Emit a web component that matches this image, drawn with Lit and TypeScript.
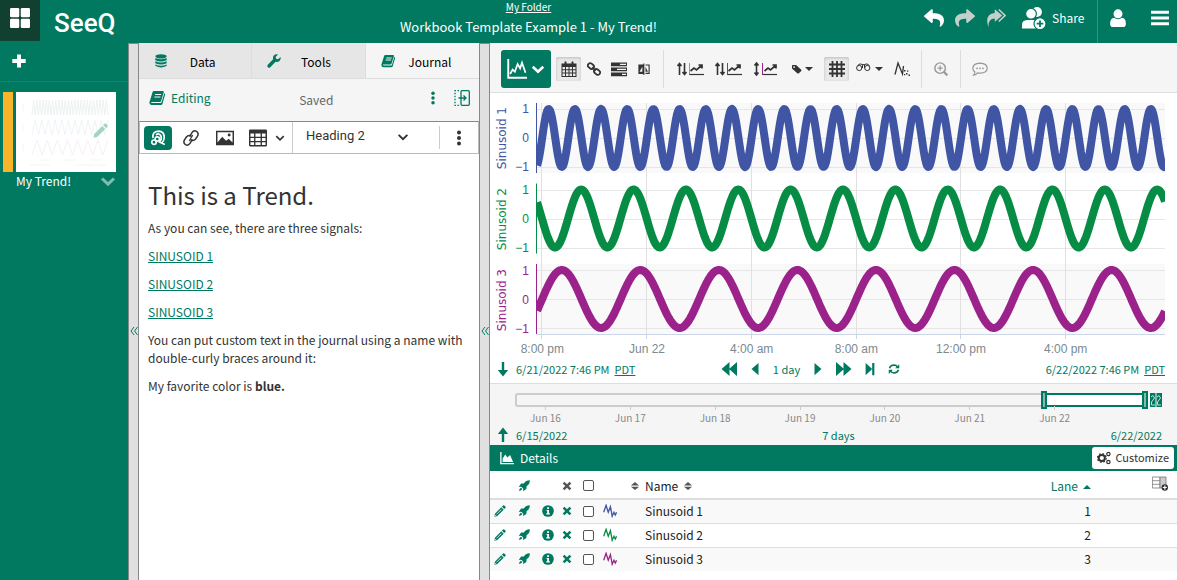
import { LitElement, html, css, svg } from "lit";
import { customElement } from "lit/decorators.js";

const REPLY = "M8.3 189.8L184.3 37.9C199.7 24.5 224 35.3 224 56v80.1c160.6 1.8 288 34 288 186.2 0 61.4-39.6 122.3-83.3 154.1-13.7 9.9-33.1-2.5-28.1-18.6 45.3-145-21.5-183.5-176.6-185.7V360c0 20.7-24.3 31.5-39.7 18.2l-176-152c-11.1-9.6-11.1-26.8 0-36.4z";
const PEN = svg`<path d="M10.6 2.2 12 .8Q13 0 14 .9L15.2 2Q16 3 15.2 4L13.8 5.4z"/><path fill-rule="evenodd" d="M9.7 3.1 12.9 6.3 4.4 14.8.6 15.5 1.2 11.6zM3 12.2l6.5-6.5.6.6-6.5 6.5zM1.6 13.1l-.2 1.5 1.5-.3z"/>`;
const BOOK = svg`<path fill-rule="evenodd" d="M5 1Q4 1 3.6 2L.5 12Q0 14.6 2.5 15H12Q13 15 13.4 14L16 5Q16.2 3.6 15.3 3.2L12.6 12.2Q12.3 13 11.6 13H3Q1.6 12.6 2.4 12H11Q11.8 12 12 11.2L14.8 2.3Q15 1 13.8 1zM6.2 4 5.9 5H12L12.3 4zM5.5 6.4 5.2 7.4H11.3L11.6 6.4z"/>`;
const ROCKET = svg`<path d="M15.8.2Q10.5.2 7.8 4.6L4.5 4.8Q3.8 5 3.2 6L1 9.2Q3.4 8.8 4.8 9.2L6.8 11.2Q7.2 12.8 6.8 15L10 12.8Q11 12.2 11.2 11.5L11.4 8.2Q16 5.4 15.8.2z"/><path d="M4 10.2Q2 10.5 1.2 14.8 5 14.2 5.8 12z"/>`;
const ICONS: Record<string, unknown> = {
  apps: svg`<rect x="0" y="0" width="7.4" height="7.4" rx="1"/><rect x="8.6" y="0" width="7.4" height="7.4" rx="1"/><rect x="0" y="8.6" width="7.4" height="7.4" rx="1"/><rect x="8.6" y="8.6" width="7.4" height="7.4" rx="1"/>`,
  plus: svg`<path d="M6 1.5h4V6h4.7v4H10v4.5H6V10H1.300V6H6z"/>`,
  chevron: svg`<path d="M2 5.500 8 11.2 14 5.500" fill="none" stroke="currentColor" stroke-width="3"/>`,
  caret: svg`<path d="M3 5.500 8 10.500 13 5.500" fill="none" stroke="currentColor" stroke-width="2.200"/>`,
  undo: svg`<path transform="scale(.03125)" d="${REPLY}"/>`,
  redo: svg`<path transform="translate(16) scale(-.03125 .03125)" d="${REPLY}"/>`,
  redoAll: svg`<path d="M7 1 13 6 7 11V8.300Q1.500 8.500 2 15.500-1.600 5 7 4z"/><path d="M10.200 1.200 15.200 6 10.200 10.800" fill="none" stroke="currentColor" stroke-width="1.300"/>`,
  share: svg`<circle cx="10" cy="4" r="3.300"/><circle cx="6" cy="5.200" r="3.600" stroke="#007960" stroke-width=".8"/><path d="M0 15v-2.500Q0 9.500 3.500 9.300H8Q11 9.500 11 12.500V15z"/><circle cx="12" cy="11.800" r="4" stroke="#007960" stroke-width=".8"/><path d="M12 9.600v4.400M9.800 11.800h4.400" stroke="#007960" stroke-width="1.200"/>`,
  user: svg`<circle cx="8" cy="4.300" r="4"/><path d="M1 13Q1 8.200 4.500 7.800 8 10.300 11.500 7.800 15 8.200 15 13 15 16 12.500 16H3.500Q1 16 1 13z"/>`,
  bars: svg`<path d="M0 1.500h16v2.800H0zM0 6.600h16v2.800H0zM0 11.700h16v2.800H0z"/>`,
  data: svg`<ellipse cx="8" cy="2.700" rx="6.500" ry="2.500"/><path d="M1.500 4.500Q8 7.500 14.500 4.500V7Q8 10 1.500 7zM1.500 8.300Q8 11.300 14.500 8.300v2.200Q8 13.500 1.500 10.500zM1.500 11.900Q8 14.900 14.500 11.900v1.500Q8 17.500 1.500 13.400z"/>`,
  wrench: svg`<path d="M15.500 3.300 12.700 5.900 10.300 5.500 10 3.200 12.600.5Q9.500-.3 7.600 2 6.400 3.800 7 6L.9 12.200Q-.3 13.800 1 15 2.400 16.200 3.800 15L9.800 8.900Q12.300 9.500 14.200 8 16.200 6 15.500 3.300z"/>`,
  book: BOOK,
  dots: svg`<circle cx="8" cy="2.500" r="2"/><circle cx="8" cy="8" r="2"/><circle cx="8" cy="13.500" r="2"/>`,
  dock: svg`<g fill="none" stroke="currentColor" stroke-width="1.300"><rect x="7" y=".7" width="8.300" height="14.600" rx="1"/><path d="M5 .7H1V15.300H5" stroke-dasharray="1.500 1.500"/><path d="M4.500 8H12M9.500 5.500 12 8 9.500 10.500"/></g>`,
  seeqLink: svg`<g fill="none" stroke="currentColor" stroke-width="1.700"><path d="M3 8Q2 1.500 8.500 1.200 14.500 1.500 14.200 8 13.800 11.500 11.500 13.200M6 5Q9 2.500 11 6 12 9.500 9.500 12L14.800 14.600"/><circle cx="4" cy="12.200" r="2.200"/><circle cx="7.300" cy="9" r="2.200"/></g>`,
  link: svg`<g fill="none" stroke="currentColor" stroke-width="1.500" stroke-linecap="round"><path d="M7 6 8.800 2.800Q10.800-.2 13.500 1.300 16.200 3.200 14.500 6.200L12.600 9Q10.700 11.300 8 10"/><path d="M9 10 7.200 13.200Q5.200 16.200 2.500 14.700-.2 12.800 1.500 9.800L3.400 7Q5.300 4.700 8 6"/><path d="M6.500 10.500 9.500 5.500" stroke-width="1.200"/></g>`,
  image: svg`<path fill-rule="evenodd" d="M0 1.500H16V14.500H0zM1.300 2.800V12L5.500 6.800 9 10.500 11.300 8.700 14.700 12V2.800z"/><circle cx="11.700" cy="5.300" r="1.300"/>`,
  table: svg`<path fill-rule="evenodd" d="M1 .5H15Q16 .5 16 1.500V14.500Q16 15.500 15 15.500H1Q0 15.500 0 14.500V1.500Q0 .5 1 .5zM1.300 4V6.800H4.500V4zM5.700 4V6.800H10.300V4zM11.500 4V6.800H14.700V4zM1.300 8V10.600H4.500V8zM5.700 8V10.600H10.300V8zM11.500 8V10.600H14.700V8zM1.300 11.800V14.300H4.500V11.800zM5.700 11.800V14.300H10.300V11.800zM11.500 11.800V14.300H14.700V11.800z"/>`,
  trend: svg`<path d="M1 0V15H16" fill="none" stroke="currentColor" stroke-width="1.500"/><path d="M2.500 12 4.500 8.500 6.300 10.200 8.500 4 10.500 7.500 12 3 14.800 11" fill="none" stroke="currentColor" stroke-width="1.400"/>`,
  calendar: svg`<path fill-rule="evenodd" d="M.5 2.500H3.500V1Q4.500-.3 5.500 1V2.500H10.500V1Q11.500-.3 12.500 1V2.500H15.500V16H.5zM1.500 6V8.200H4V6zM5 6V8.200H7.500V6zM8.500 6V8.200H11V6zM12 6V8.200H14.500V6zM1.500 9.200V11.600H4V9.200zM5 9.200V11.600H7.500V9.200zM8.500 9.200V11.600H11V9.200zM12 9.200V11.600H14.500V9.200zM1.500 12.600V15H4V12.600zM5 12.600V15H7.500V12.600zM8.500 12.600V15H11V12.600zM12 12.600V15H14.500V12.600z"/>`,
  chain: svg`<g fill="none" stroke="currentColor" stroke-width="2"><rect x="-3.700" y="-2.600" width="7.400" height="5.200" rx="2.500" transform="translate(4.500 4.700) rotate(40)"/><rect x="-3.700" y="-2.600" width="7.400" height="5.200" rx="2.500" transform="translate(11.500 11.300) rotate(40)"/><path d="M6 6 10 10"/></g>`,
  stack: svg`<path fill-rule="evenodd" d="M0 1.500H16V5.300H0zM9 2.800V4H15V2.800zM0 6.500H16V10.300H0zM6 7.800V9H15V7.800zM0 11.500H16V15.300H0zM11 12.800V14H15V12.800z"/>`,
  compare: svg`<path d="M.5 2H7V14.500H.5zM7 .5h1.500v15.500H7z"/><path d="M10 2.700H14.800V13.800H10" fill="none" stroke="currentColor" stroke-width="1.500"/><path d="M2 11.500 5.800 5V11.500z" fill="#f5f5f5"/><path d="M10 5V11.500H13.200z"/>`,
  tag: svg`<path fill-rule="evenodd" d="M0 2.500Q0 1.500 1 1.500H6.500L14.800 9.300Q15.600 10.200 14.800 11L10.500 15Q9.700 15.700 8.900 15L0 7.200zM3.300 3.500a1.300 1.300 0 1 0 .1 0z"/>`,
  grid: svg`<path d="M0 3.500H16M0 8H16M0 12.500H16M3.500 0V16M8 0V16M12.500 0V16" fill="none" stroke="currentColor" stroke-width="1.800"/>`,
  glasses: svg`<g fill="none" stroke="currentColor" stroke-width="1"><circle cx="3.200" cy="7" r="2.600"/><circle cx="11.300" cy="7" r="2.600"/><path d="M1.500 4.500Q4 1.800 6.500 3.500V7M8.500 7V3.500Q11 1.800 13.500 4.500M6.500 3.600H8.500"/></g>`,
  sparse: svg`<path d="M1 13.500 4 2 8.500 13 9.500 5" fill="none" stroke="currentColor" stroke-width="1.300"/><path d="M10 9h1.500v1.500H10zM12 12h1.500v1.500H12zM14.500 13.500H16V15h-1.500zM10 13h1.300v1.300H10zM13 9.500h1.300v1.300H13z"/>`,
  zoom: svg`<g fill="none" stroke="currentColor" stroke-width="1.700"><circle cx="7" cy="7" r="6"/><path d="M7 4V10M4 7H10" stroke-width="1.400"/><path d="M11.300 11.300 15.300 15.300" stroke-width="2.500"/></g>`,
  comment: svg`<path d="M8 2.200Q15.200 2.500 15.200 7.300 15 12 8 12.200 6.500 12.200 5.500 11.900 4 14 1.600 14.200 3 12.500 2.900 10.900.8 9.500.8 7.300 1 2.500 8 2.200z" fill="none" stroke="currentColor" stroke-width="1.200"/><circle cx="5" cy="7.300" r=".9"/><circle cx="8" cy="7.300" r=".9"/><circle cx="11" cy="7.300" r=".9"/>`,
  down: svg`<path d="M6.800 1H9.200V9H13.200L8 15.500 2.800 9H6.800z"/>`,
  up: svg`<path d="M6.800 15H9.200V7H13.200L8 .5 2.800 7H6.800z"/>`,
  back2: svg`<path d="M8.500 1V15L.5 8zM16 1V15L8 8z"/>`,
  back: svg`<path d="M12 1V15L4 8z"/>`,
  fwd: svg`<path d="M4 1V15L12 8z"/>`,
  fwd2: svg`<path d="M0 1V15L8 8zM7.500 1V15L15.500 8z"/>`,
  last: svg`<path d="M3 1V15L10.500 8zM10.500 1H13V15H10.500z"/>`,
  refresh: svg`<g fill="none" stroke="currentColor" stroke-width="2"><path d="M2 7Q3 3 8 2.800 11 2.800 13 5.500M14 9Q13 13 8 13.200 5 13.200 3 10.500"/></g><path d="M15 1.500V7H9.500zM1 14.500V9H6.500z"/>`,
  area: svg`<path d="M1 1V14.500H16" fill="none" stroke="currentColor" stroke-width="1.500"/><path d="M3 12.500V8.500L6 4 8.500 7.500 11.500 4.500 15 12.500z"/>`,
  cogs: svg`<circle cx="5.500" cy="8" r="3.500" fill="none" stroke="currentColor" stroke-width="2.200"/><circle cx="5.500" cy="8" r="5" fill="none" stroke="currentColor" stroke-width="1.400" stroke-dasharray="2 1.930"/><circle cx="13" cy="3.500" r="1.900" fill="none" stroke="currentColor" stroke-width="1.400"/><circle cx="13" cy="12.500" r="1.900" fill="none" stroke="currentColor" stroke-width="1.400"/>`,
  rocket: ROCKET,
  close: svg`<path d="M2.500 2.500 13.500 13.500M13.500 2.500 2.500 13.500" stroke="currentColor" stroke-width="4" fill="none"/>`,
  pen: PEN,
  info: svg`<circle cx="8" cy="8" r="7.800"/><path d="M6 6.500H9.300V11H10.500V12.500H5.700V11H7V8H6zM6.900 3H9.300V5.200H6.900z" fill="#fff"/>`,
  signal: svg`<path d="M.8 9.500 3.500 1.500 6 9.500 8.500 3 10.500 14 12.500 9.500 14 12.500 15.500 9.500" fill="none" stroke="currentColor" stroke-width="1.500"/>`,
  sort: svg`<path d="M8 1.500 14.500 7H1.500zM8 14.500 14.500 9H1.500z"/>`,
  columns: svg`<g fill="none" stroke="#777" stroke-width=".8"><path d="M.4 1H8V12H.4zM.4 4.700H8M.4 8.300H8"/></g><path d="M8 1H14V12H8z" fill="#ccc" stroke="#777" stroke-width=".8"/><circle cx="12.800" cy="11.500" r="3.200" fill="#333"/><path d="M12.800 9.500v4M10.800 11.500h4" stroke="#fff" stroke-width="1.200"/>`,
};
const icon = (name: string, cls = "") =>
  html`<svg class="ic ${cls}" viewBox="0 0 16 16" aria-hidden="true">${ICONS[name]}</svg>`;

const laneIcon = (kind: number) => html`<svg class="wide" viewBox="0 0 27 14" aria-hidden="true">
  ${kind === 2
    ? svg`<path d="M3.500 2V12M1.500 3.500 3.500 1 5.500 3.500M1.500 10.500 3.500 13 5.500 10.500" fill="none" stroke="#333" stroke-width="1.600"/>`
    : svg`<path d="M2.500 2V13M.5 4 2.500 1.500 4.500 4M7.500 1V12M5.500 10 7.500 12.500 9.500 10" fill="none" stroke="#333" stroke-width="1.600"/>`}
  <path d="${kind === 2 ? "M9.500 1V13" : "M12.500 1V13"}" stroke="${kind === 2 ? "#9b228b" : kind ? "#4055a3" : "#d8902f"}" stroke-width="1"/>
  <path d="${kind === 2 ? "M9.500 12.500H24" : "M12.500 12.500H27"}" stroke="#333" stroke-width="1.200"/>
  <g transform="translate(${kind === 2 ? -2 : 0} 0)"><path d="M13.500 9 17 6 19.500 8 24.500 3.500M21.500 3H25V6.500" fill="none" stroke="#333" stroke-width="1.700"/></g>
</svg>`;

const PLOT_W = 628;
const LANE_H = 70;
const GRID_X = [4, 109, 214, 319, 423, 528];
const wave = (period: number, peak: number) => {
  const pts: string[] = [];
  for (let x = 0; x <= PLOT_W; x += 1) {
    const y = 35 - 29 * Math.cos(((x - peak) / period) * 2 * Math.PI);
    pts.push(`${x},${y.toFixed(2)}`);
  }
  return pts.join(" ");
};
const SIGNALS = [
  { name: "Sinusoid 1", color: "#4055a3", period: 26.18, peak: 11.700, band: true },
  { name: "Sinusoid 2", color: "#068c45", period: 52.36, peak: 44.200, band: false },
  { name: "Sinusoid 3", color: "#9b228b", period: 78.54, peak: 24.800, band: true },
];
const HOURS = ["8:00 pm", "Jun 22", "4:00 am", "8:00 am", "12:00 pm", "4:00 pm"];
const DAYS = [16, 17, 18, 19, 20, 21, 22];

const base = css`
  * { box-sizing: border-box; }
  button, select, input { font: inherit; color: inherit; margin: 0; }
  button { display: flex; align-items: center; justify-content: center; padding: 0; border: 0; background: none; }
  a { color: inherit; }
  svg { display: block; flex: none; }
  .ic { width: 16px; height: 16px; fill: currentColor; }
  .s10 { width: 10px; height: 10px; }
  .s12 { width: 12px; height: 12px; }
  .s14 { width: 14px; height: 14px; }
  .s18 { width: 18px; height: 18px; }
  .s20 { width: 20px; height: 20px; }
  .s24 { width: 24px; height: 24px; }
`;

@customElement("app-header")
export class AppHeader extends LitElement {
  static styles = [base, css`
    :host { display: flex; height: 43px; background: #007960; color: #fff; }
    .left { display: flex; width: 139px; }
    .home { width: 40px; height: 41px; padding-bottom: 6px; background: #124030; }
    .logo { margin-left: 14px; font: 500 26px/46px Roboto, sans-serif; }
    .mid { flex: 1; text-align: center; }
    .folder { display: block; font-size: 10px; line-height: 14px; }
    h1 { margin: 6px 0 0; font-size: 13px; font-weight: 400; line-height: 14px; }
    .right { display: flex; width: 259px; }
    .right button { width: 31px; height: 36px; }
    .right .dim { color: #c3cfca; }
    .right .share { width: 86px; gap: 6px; justify-content: flex-start; padding-left: 11px; font-size: 12px; }
    .right .user { width: 41px; height: 43px; padding-bottom: 7px; border-left: 1px solid #33947f; }
    .right .menu { flex: 1; padding-left: 5px; }
  `];
  render() {
    return html`
      <div class="left">
        <button class="home" aria-label="Home">${icon("apps", "s20")}</button>
        <span class="logo">SeeQ</span>
      </div>
      <div class="mid">
        <a class="folder" href="#">My Folder</a>
        <h1>Workbook Template Example 1 - My Trend!</h1>
      </div>
      <div class="right">
        <button aria-label="Undo">${icon("undo", "s20")}</button>
        <button class="dim" aria-label="Redo">${icon("redo", "s20")}</button>
        <button class="dim" aria-label="Redo all">${icon("redoAll", "s20")}</button>
        <button class="share">${icon("share", "s24")}<span>Share</span></button>
        <button class="user" aria-label="Account">${icon("user", "s18")}</button>
        <button class="menu" aria-label="Menu">${icon("bars", "s18")}</button>
      </div>`;
  }
}

@customElement("worksheet-list")
export class WorksheetList extends LitElement {
  static styles = [base, css`
    :host { display: block; width: 128px; background: #007960; color: #fff; }
    .add { width: 100%; height: 39px; padding: 0 0 3px 11px; justify-content: flex-start; border-bottom: 1px solid #12866d; }
    .sheet { display: grid; grid-template-columns: 10px 100px; column-gap: 3px; padding: 10px 12px 0 3px; }
    .mark { background: #fab42a; }
    .thumb { height: 80px; background: #fff; }
    .name { grid-column: 2; display: flex; justify-content: space-between; align-items: center; font-size: 12px; line-height: 18px; }
    .name svg { color: #7fbcaf; }
  `];
  render() {
    const mini = (n: number, y: number) => {
      let d = "";
      for (let i = 0; i <= n; i++) d += `${i ? "L" : "M"}${16 + (i * 76) / n} ${i % 2 ? y : y + 15}`;
      return d;
    };
    return html`
      <button class="add" aria-label="Add worksheet">${icon("plus")}</button>
      <div class="sheet">
        <div class="mark"></div>
        <div class="thumb">
          <svg viewBox="0 0 100 80" width="100" height="80" fill="none">
            <path d="${mini(48, 8)}" stroke="#edf3f1"/>
            <path d="${mini(23, 28)}" stroke="#f1f3f8"/>
            <path d="${mini(15, 48)}" stroke="#f7f0f4"/>
            <path d="M7 12v7M7 32v7M7 52v7M25 68h9M48 68h12M74 68h12M14 73h20M60 73h30" stroke="#f4f4f4"/>
            <g transform="translate(77 31) scale(.95)" fill="#a5d4c6"><path d="M9.700 3.100 12.900 6.300 4.400 14.800.6 15.500 1.200 11.600zM10.600 2.200 12 .8Q13 0 14 .9L15.200 2Q16 3 15.200 4L13.800 5.400z"/></g>
          </svg>
        </div>
        <div class="name"><span>My Trend!</span>${icon("chevron")}</div>
      </div>`;
  }
}

@customElement("journal-panel")
export class JournalPanel extends LitElement {
  static styles = [base, css`
    :host { display: block; width: 340px; background: #fff; color: #333; }
    nav { display: grid; grid-template-columns: repeat(3, 1fr); height: 36px; }
    nav button { display: grid; grid-template-columns: 14px 1fr; padding: 0 14px 0 15px; border-right: 1px solid #ddd; border-bottom: 1px solid #ddd; background: #e6e6e6; color: #000; font-size: 12px; }
    nav button:last-child { border-right: 0; background: #f5f5f5; }
    nav span { text-align: center; padding-top: 4px; }
    nav svg { color: #007960; }
    .bar { display: flex; align-items: center; height: 42px; padding: 0 3px 0 10px; background: #f5f5f5; color: #007960; font-size: 12px; }
    .edit { gap: 6px; padding-bottom: 4px; }
    .saved { flex: 1; text-align: center; color: #666; padding-left: 4px; }
    .bar .more { width: 29px; padding-bottom: 4px; }
    .tools { display: flex; align-items: center; height: 33px; border: 1px solid #bbb; border-top-color: #888; padding-left: 4px; }
    .seeq { width: 28px; height: 24px; border-radius: 4px; background: #007960; color: #fff; }
    .tool { width: 30px; }
    .tool.link { width: 38px; }
    .tool.tbl { width: 52px; gap: 7px; padding-left: 3px; }
    .pick { display: flex; align-items: center; flex: 1; height: 31px; border-left: 1px solid #ccc; padding: 0 29px 2px 13px; font-family: Roboto, sans-serif; }
    select { flex: 1; min-width: 0; appearance: none; border: 0; background: none; padding: 0; font-size: 13px; }
    .tools .last { width: 39px; height: 23px; border-left: 1px solid #ccc; }
    article { padding: 24px 8px 0 9px; font-size: 12px; line-height: 18px; }
    h2 { margin: 0 0 7px; font-size: 24px; font-weight: 400; line-height: 34px; }
    p { margin: 0 0 10px; }
    article a { color: #007960; }
  `];
  render() {
    return html`
      <nav>
        <button>${icon("data", "s14")}<span>Data</span></button>
        <button>${icon("wrench", "s14")}<span>Tools</span></button>
        <button>${icon("book", "s14")}<span>Journal</span></button>
      </nav>
      <div class="bar">
        <button class="edit">${icon("book")}<span>Editing</span></button>
        <span class="saved">Saved</span>
        <button class="more" aria-label="More options">${icon("dots", "s14")}</button>
        <button class="more" aria-label="Dock panel">${icon("dock")}</button>
      </div>
      <div class="tools">
        <button class="seeq" aria-label="Insert Seeq link">${icon("seeqLink")}</button>
        <button class="tool link" aria-label="Insert link">${icon("link")}</button>
        <button class="tool" aria-label="Insert image">${icon("image", "s18")}</button>
        <button class="tool tbl" aria-label="Insert table">${icon("table", "s18")}${icon("caret", "s12")}</button>
        <div class="pick">
          <select aria-label="Text style"><option>Heading 2</option><option>Paragraph</option></select>
          ${icon("caret", "s14")}
        </div>
        <button class="last" aria-label="More tools">${icon("dots")}</button>
      </div>
      <article>
        <h2>This is a Trend.</h2>
        <p>As you can see, there are three signals:</p>
        <p><a href="#">SINUSOID 1</a></p>
        <p><a href="#">SINUSOID 2</a></p>
        <p><a href="#">SINUSOID 3</a></p>
        <p>You can put custom text in the journal using a name with double-curly braces around it:</p>
        <p>My favorite color is <b>blue.</b></p>
      </article>`;
  }
}

@customElement("trend-toolbar")
export class TrendToolbar extends LitElement {
  static styles = [base, css`
    :host { display: flex; align-items: center; height: 50px; padding: 2px 0 0 11px; background: #f5f5f5; border-bottom: 1px solid #ddd; color: #333; }
    .view { width: 50px; height: 38px; margin-right: 5px; gap: 4px; border-radius: 3px; background: #007960; color: #fff; }
    .b { width: 25px; height: 24px; }
    .lane { width: 38px; height: 24px; }
    .drop { width: 35px; height: 24px; gap: 3px; }
    .drop::after { content: ""; border: 4px solid transparent; border-top-color: #333; border-bottom: 0; }
    .on { background: #e9e9e9; box-shadow: inset 0 1px 3px #bbb; border-radius: 2px; }
    .sep { width: 1px; height: 38px; background: #ddd; margin: 0 7px; }
    .grid { margin: 0 3px 0 4px; }
    .sum { margin-left: 2px; }
    .dim { width: 24px; height: 24px; color: #999; }
    .wide { width: 27px; height: 14px; }
  `];
  render() {
    return html`
      <button class="view" aria-label="Trend view">${icon("trend", "s20")}${icon("chevron", "s14")}</button>
      <button class="b on" aria-label="Calendar time">${icon("calendar")}</button>
      <button class="b" aria-label="Chain view">${icon("chain", "s14")}</button>
      <button class="b" aria-label="Capsule time">${icon("stack")}</button>
      <button class="b" aria-label="Compare">${icon("compare", "s12")}</button>
      <span class="sep"></span>
      <button class="lane" aria-label="One lane">${laneIcon(0)}</button>
      <button class="lane" aria-label="One axis">${laneIcon(1)}</button>
      <button class="lane" aria-label="Reset axes">${laneIcon(2)}</button>
      <button class="drop" aria-label="Labels">${icon("tag", "s10")}</button>
      <button class="b on grid" aria-label="Gridlines">${icon("grid")}</button>
      <button class="drop" aria-label="Dimming">${icon("glasses")}</button>
      <button class="b sum" aria-label="Summary">${icon("sparse")}</button>
      <span class="sep"></span>
      <button class="dim" aria-label="Zoom">${icon("zoom", "s14")}</button>
      <span class="sep"></span>
      <button class="dim" aria-label="Annotate">${icon("comment")}</button>`;
  }
}

@customElement("trend-chart")
export class TrendChart extends LitElement {
  static styles = [base, css`
    :host { display: block; background: #fff; padding: 10px 12px 0 0; }
    .chart { display: grid; grid-template-columns: 24px 22px 1fr; grid-template-rows: 81px 81px 74px; }
    .label { display: flex; align-items: center; justify-content: center; height: 70px; }
    .label span { writing-mode: vertical-rl; transform: rotate(180deg); font: 12px/14px "DejaVu Sans", sans-serif; }
    .axis { display: flex; flex-direction: column; justify-content: space-between; height: 70px; padding-right: 7px; text-align: right; font: 12px/12px "Liberation Sans", sans-serif; }
    .plots { grid-column: 3; grid-row: 1 / span 3; }
    svg.plot { width: 100%; height: 236px; }
    .hours { display: grid; grid-template-columns: repeat(6, 1fr); padding: 3px 47px 0 0; font: 12px/14px "Liberation Sans", sans-serif; color: #7b8a90; text-align: center; }
  `];
  render() {
    return html`
      <div class="chart">
        ${SIGNALS.map((s) => html`
          <div class="label" style="color:${s.color}"><span>${s.name}</span></div>
          <div class="axis" style="color:${s.color}"><span>1</span><span>0</span><span>−1</span></div>`)}
        <div class="plots">
          <svg class="plot" viewBox="-1 0 629 236" preserveAspectRatio="none" role="img" aria-label="Three sinusoid signals">
            ${SIGNALS.map((s, i) => svg`
              ${s.band ? svg`<rect x="0" y="${i * 80.5}" width="628" height="${LANE_H}" fill="#f9f9f9"/>` : ""}
              ${[6, 35, 64].map((y) => svg`<path d="M0 ${Math.round(i * 80.5 + y) + 0.5}H628" stroke="#e6e6e6"/>`)}`)}
            ${GRID_X.map((x) => svg`<path d="M${x + 0.5} 0V231" stroke="#e0e0e0"/><path d="M${x + 0.5} 231V236" stroke="#ccd6eb"/>`)}
            <path d="M0 231.500H628" stroke="#ccd6eb"/>
            ${SIGNALS.map((s, i) => svg`
              <g transform="translate(0 ${i * 80.5})">
                <path d="M-.5 0V${LANE_H}" stroke="${s.color}" stroke-width="1"/>
                <polyline points="${wave(s.period, s.peak)}" fill="none" stroke="${s.color}" stroke-width="8" stroke-linejoin="round"/>
              </g>`)}
          </svg>
        </div>
      </div>
      <div class="hours">${HOURS.map((h) => html`<span>${h}</span>`)}</div>`;
  }
}

@customElement("time-range")
export class TimeRange extends LitElement {
  static styles = [base, css`
    :host { display: block; color: #007960; font-size: 11px; line-height: 16px; }
    .row { display: grid; grid-template-columns: 1fr auto 1fr; align-items: center; height: 27px; padding: 0 12px 1px 5px; background: #fff; }
    .start { display: flex; align-items: center; gap: 5px; }
    .end { text-align: right; }
    .nav { display: flex; align-items: center; gap: 11px; padding-right: 39px; }
    .days7 { padding-left: 20px; }
    .range { padding: 9px 12px 0 5px; background: #f5f5f5; border-top: 1px solid #ddd; }
    .track { display: flex; align-items: center; margin: 0 3px 0 20px; height: 14px; }
    .rest { flex: 528; height: 14px; border: 2px solid #ccc; border-right: 0; border-radius: 3px 0 0 3px; }
    .sel { flex: 96; height: 14px; border: 2px solid #007960; border-width: 2px 0; background: #fff; }
    .handle { width: 6px; height: 18px; border: 2px solid #007960; background: #7fbcaf; }
    .now { width: 12px; height: 14px; margin-left: 2px; }
    .days { display: flex; padding: 0 68px 0 8px; font-size: 10px; line-height: 15px; color: #888; }
    .days span { flex: 1; text-align: center; }
    .days span::before { content: ""; display: block; width: 1px; height: 4px; margin: -1px auto 0; background: #ccc; }
    .range .row { background: none; height: 20px; padding: 0 3px 0 0; }
  `];
  render() {
    return html`
      <div class="row">
        <div class="start">${icon("down")}<span>6/21/2022 7:46 PM</span><a href="#">PDT</a></div>
        <div class="nav">
          <button aria-label="Back one range">${icon("back2")}</button>
          <button aria-label="Back half range">${icon("back", "s14")}</button>
          <span>1 day</span>
          <button aria-label="Forward half range">${icon("fwd", "s14")}</button>
          <button aria-label="Forward one range">${icon("fwd2")}</button>
          <button aria-label="Jump to now">${icon("last", "s14")}</button>
          <button aria-label="Refresh">${icon("refresh", "s12")}</button>
        </div>
        <div class="end"><span>6/22/2022 7:46 PM</span>&nbsp; <a href="#">PDT</a></div>
      </div>
      <div class="range">
        <div class="track">
          <div class="rest"></div>
          <button class="handle" aria-label="Range start"></button>
          <div class="sel"></div>
          <button class="handle" aria-label="Range end"></button>
          <svg class="now" viewBox="0 0 12 14" aria-hidden="true"><path d="M0 0H5.500V14H0zM6.500 0H12V14H6.500z" fill="#007960"/><path d="M1 4 3 2.500 4.500 5 1.500 9V12H5M7 4 9 2.500 10.500 5 7.500 9V12H11" fill="none" stroke="#c8dcd6" stroke-width="1"/></svg>
        </div>
        <div class="days">${DAYS.map((d) => html`<span>Jun ${d}</span>`)}</div>
        <div class="row">
          <div class="start">${icon("up")}<span>6/15/2022</span></div>
          <span class="days7">7 days</span>
          <div class="end">6/22/2022</div>
        </div>
      </div>`;
  }
}

@customElement("details-pane")
export class DetailsPane extends LitElement {
  static styles = [base, css`
    :host { display: block; flex: 1; background: #fff; color: #222; font-size: 12px; }
    header { display: flex; align-items: center; justify-content: space-between; height: 26px; padding: 0 3px 0 10px; background: #007960; color: #fff; }
    h3 { display: flex; align-items: center; gap: 6px; margin: 0; font-size: 12px; font-weight: 400; }
    .custom { gap: 4px; height: 22px; padding: 0 5px; border-radius: 3px; background: #fff; color: #333; font-size: 11px; }
    table { width: 100%; border-collapse: collapse; table-layout: fixed; line-height: 20px; }
    th, td { height: 24px; padding: 0; text-align: left; font-weight: 400; }
    th { height: 28px; padding-top: 2px; }
    thead tr { border-bottom: 2px solid #ddd; }
    tbody tr { border-bottom: 1px solid #ddd; }
    tbody tr:last-child { border: 0; }
    tbody tr:nth-child(odd) { background: #f9f9f9; }
    .g { color: #007960; }
    .k { color: #555; }
    input { display: block; appearance: none; width: 11px; height: 11px; border: 1px solid #555; border-radius: 2px; background: #fff; }
    .c0 { width: 28px; } .c1 { width: 24px; } .c2 { width: 20px; } .c3 { width: 21px; } .c4 { width: 20px; } .c5 { width: 27px; } .c6 { width: 15px; }
    .lane { width: 100px; } .end { width: 86px; }
    td:first-child { padding-left: 4px; }
    .name { display: flex; align-items: center; gap: 5px; }
    .right { text-align: right; }
    .sorted { display: flex; justify-content: flex-end; gap: 5px; color: #007960; }
    .sorted::after { content: ""; height: 4px; margin-top: 5px; border: 4px solid transparent; border-bottom-color: #007960; border-top: 0; }
    .cols { padding-left: 61px; }
    .cols svg { margin-bottom: 4px; }
  `];
  render() {
    return html`
      <header>
        <h3>${icon("area", "s14")}Details</h3>
        <button class="custom">${icon("cogs", "s14")}<span>Customize</span></button>
      </header>
      <table>
        <colgroup><col class="c0"><col class="c1"><col class="c2"><col class="c3"><col class="c4"><col class="c5"><col class="c6"><col><col class="lane"><col class="end"></colgroup>
        <thead><tr>
          <th></th>
          <th class="g">${icon("rocket", "s12")}</th>
          <th></th>
          <th class="k">${icon("close", "s10")}</th>
          <th><input type="checkbox" aria-label="Select all"></th>
          <th></th>
          <th class="k">${icon("sort", "s10")}</th>
          <th><div class="name">Name <span class="k">${icon("sort", "s10")}</span></div></th>
          <th><div class="sorted">Lane</div></th>
          <th class="cols">${icon("columns")}</th>
        </tr></thead>
        <tbody>
          ${SIGNALS.map((s, i) => html`<tr>
            <td class="g">${icon("pen", "s12")}</td>
            <td class="g">${icon("rocket", "s12")}</td>
            <td class="g">${icon("info", "s12")}</td>
            <td class="g">${icon("close", "s10")}</td>
            <td><input type="checkbox" aria-label="Select ${s.name}"></td>
            <td style="color:${s.color}">${icon("signal", "s14")}</td>
            <td></td>
            <td>${s.name}</td>
            <td class="right">${i + 1}</td>
            <td></td>
          </tr>`)}
        </tbody>
      </table>`;
  }
}

@customElement("app-root")
export class AppRoot extends LitElement {
  static styles = [base, css`
    :host { display: flex; flex-direction: column; min-height: 100vh; font-family: "Noto Sans CJK SC", "Noto Sans", sans-serif; line-height: 1.400; }
    .body { display: flex; flex: 1; }
    .gutter { width: 11px; padding-top: 38px; border: 1px solid #888; border-bottom: 0; background: #e0e0e0; }
    .gutter svg { width: 8px; height: 10px; }
    main { flex: 1; min-width: 0; display: flex; flex-direction: column; background: #fff; }
  `];
  gutter() {
    return html`<button class="gutter" aria-label="Collapse panel"><svg viewBox="0 0 8 10"><path d="M4 1 1 5 4 9M7.500 1 4.500 5 7.500 9" fill="none" stroke="#007960"/></svg></button>`;
  }
  render() {
    return html`
      <app-header></app-header>
      <div class="body">
        <worksheet-list></worksheet-list>
        ${this.gutter()}
        <journal-panel></journal-panel>
        ${this.gutter()}
        <main>
          <trend-toolbar></trend-toolbar>
          <trend-chart></trend-chart>
          <time-range></time-range>
          <details-pane></details-pane>
        </main>
      </div>`;
  }
}
